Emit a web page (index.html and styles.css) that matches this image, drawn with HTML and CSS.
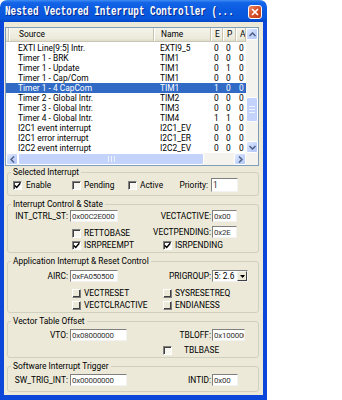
FILE: index.html
```html
<!DOCTYPE html>
<html>

<head>
    <meta charset="utf-8">
    <title>Nested Vectored Interrupt Controller</title>

    <link rel="stylesheet" href="styles.css">
</head>

<body>

    <div class="window">
        <div class="title_bar">
            <span class="title_text">Nested Vectored Interrupt Controller (...</span>
            <span class="close_btn">
                <svg width="8" height="8" viewBox="0 0 8 8"><path d="M1 1L7 7M7 1L1 7" stroke="#fff" stroke-width="1.7"/></svg>
            </span>
        </div>

        <div class="frame">
            <!-- список прерываний -->
            <div class="list_box">
                <div class="list_main">
                    <div class="list_row list_head">
                        <div class="c0"></div>
                        <div class="c_src">Source</div>
                        <div class="c_name">Name</div>
                        <div class="c_e">E</div>
                        <div class="c_p">P</div>
                        <div class="c_a">A</div>
                    </div>
                    <div class="list_row"><div class="c0"></div><div class="c_src">EXTI Line[9:5] Intr.</div><div class="c_name">EXTI9_5</div><div class="c_e">0</div><div class="c_p">0</div><div class="c_a">0</div></div>
                    <div class="list_row"><div class="c0"></div><div class="c_src">Timer 1 - BRK</div><div class="c_name">TIM1</div><div class="c_e">0</div><div class="c_p">0</div><div class="c_a">0</div></div>
                    <div class="list_row"><div class="c0"></div><div class="c_src">Timer 1 - Update</div><div class="c_name">TIM1</div><div class="c_e">0</div><div class="c_p">1</div><div class="c_a">0</div></div>
                    <div class="list_row"><div class="c0"></div><div class="c_src">Timer 1 - Cap/Com</div><div class="c_name">TIM1</div><div class="c_e">0</div><div class="c_p">0</div><div class="c_a">0</div></div>
                    <div class="list_row selected"><div class="c0"></div><div class="c_src">Timer 1 - 4 CapCom</div><div class="c_name">TIM1</div><div class="c_e">1</div><div class="c_p">0</div><div class="c_a">0</div></div>
                    <div class="list_row"><div class="c0"></div><div class="c_src">Timer 2 - Global Intr.</div><div class="c_name">TIM2</div><div class="c_e">0</div><div class="c_p">0</div><div class="c_a">0</div></div>
                    <div class="list_row"><div class="c0"></div><div class="c_src">Timer 3 - Global Intr.</div><div class="c_name">TIM3</div><div class="c_e">0</div><div class="c_p">0</div><div class="c_a">0</div></div>
                    <div class="list_row"><div class="c0"></div><div class="c_src">Timer 4 - Global Intr.</div><div class="c_name">TIM4</div><div class="c_e">1</div><div class="c_p">1</div><div class="c_a">0</div></div>
                    <div class="list_row"><div class="c0"></div><div class="c_src">I2C1 event interrupt</div><div class="c_name">I2C1_EV</div><div class="c_e">0</div><div class="c_p">0</div><div class="c_a">0</div></div>
                    <div class="list_row"><div class="c0"></div><div class="c_src">I2C1 error interrupt</div><div class="c_name">I2C1_ER</div><div class="c_e">0</div><div class="c_p">0</div><div class="c_a">0</div></div>
                    <div class="list_row"><div class="c0"></div><div class="c_src">I2C2 event interrupt</div><div class="c_name">I2C2_EV</div><div class="c_e">0</div><div class="c_p">0</div><div class="c_a">0</div></div>
                </div>

                <div class="vscroll">
                    <div class="sb_btn"><svg width="7" height="5" viewBox="0 0 7 5"><path d="M0.5 4L3.5 1L6.5 4" fill="none" stroke="#4d6185" stroke-width="1.5"/></svg></div>
                    <div class="sb_track v_top"></div>
                    <div class="sb_thumb v_thumb"><span class="grip_v"></span></div>
                    <div class="sb_track v_rest"></div>
                    <div class="sb_btn"><svg width="7" height="5" viewBox="0 0 7 5"><path d="M0.5 1L3.5 4L6.5 1" fill="none" stroke="#4d6185" stroke-width="1.5"/></svg></div>
                </div>

                <div class="hscroll">
                    <div class="sb_btn"><svg width="5" height="7" viewBox="0 0 5 7"><path d="M4 0.5L1 3.5L4 6.5" fill="none" stroke="#4d6185" stroke-width="1.5"/></svg></div>
                    <div class="sb_thumb h_thumb"><span class="grip_h"></span></div>
                    <div class="sb_track h_rest"></div>
                    <div class="sb_btn"><svg width="5" height="7" viewBox="0 0 5 7"><path d="M1 0.5L4 3.5L1 6.5" fill="none" stroke="#4d6185" stroke-width="1.5"/></svg></div>
                </div>
                <div class="corner"></div>
            </div>

            <fieldset class="group grp_sel">
                <legend>Selected Interrupt</legend>
                <div class="sel_row">
                    <label class="cb_item first"><span class="chk on"><svg width="7" height="7" viewBox="0 0 7 7"><path d="M0.8 3.4L2.7 5.4L6.3 1.2" fill="none" stroke="#000" stroke-width="1.5"/></svg></span>Enable</label>
                    <label class="cb_item"><span class="chk"></span>Pending</label>
                    <label class="cb_item"><span class="chk"></span>Active</label>
                    <div class="lbl">Priority:</div>
                    <div><input class="txt prio" type="text" value="1"></div>
                </div>
            </fieldset>

            <fieldset class="group grp_state">
                <legend>Interrupt Control &amp; State</legend>
                <div class="form_grid">
                    <div class="lbl">INT_CTRL_ST:</div>
                    <div><input class="txt w48" type="text" value="0x00C2E000"></div>
                    <div class="lbl">VECTACTIVE:</div>
                    <div><input class="txt w25" type="text" value="0x00"></div>

                    <div></div>
                    <label class="cb_item"><span class="chk"></span>RETTOBASE</label>
                    <div class="lbl">VECTPENDING:</div>
                    <div><input class="txt w25" type="text" value="0x2E"></div>

                    <div></div>
                    <label class="cb_item"><span class="chk on"><svg width="7" height="7" viewBox="0 0 7 7"><path d="M0.8 3.4L2.7 5.4L6.3 1.2" fill="none" stroke="#000" stroke-width="1.5"/></svg></span>ISRPREEMPT</label>
                    <label class="cb_item wide"><span class="chk on"><svg width="7" height="7" viewBox="0 0 7 7"><path d="M0.8 3.4L2.7 5.4L6.3 1.2" fill="none" stroke="#000" stroke-width="1.5"/></svg></span>ISRPENDING</label>
                </div>
            </fieldset>

            <fieldset class="group grp_app">
                <legend>Application Interrupt &amp; Reset Control</legend>
                <div class="form_grid">
                    <div class="lbl">AIRC:</div>
                    <div><input class="txt w48" type="text" value="0xFA050500"></div>
                    <div class="lbl">PRIGROUP:</div>
                    <div class="combo">
                        <span class="combo_val">5: 2.6</span>
                        <span class="combo_btn"><svg width="5" height="3" viewBox="0 0 5 3"><path d="M0 0H5L2.5 3Z" fill="#000"/></svg></span>
                    </div>

                    <div></div>
                    <label class="cb_item"><span class="chk flat"></span>VECTRESET</label>
                    <label class="cb_item wide"><span class="chk flat"></span>SYSRESETREQ</label>

                    <div></div>
                    <label class="cb_item"><span class="chk flat"></span>VECTCLRACTIVE</label>
                    <label class="cb_item wide"><span class="chk flat"></span>ENDIANESS</label>
                </div>
            </fieldset>

            <fieldset class="group grp_vto">
                <legend>Vector Table Offset</legend>
                <div class="form_grid">
                    <div class="lbl">VTO:</div>
                    <div><input class="txt w57" type="text" value="0x08000000"></div>
                    <div class="lbl">TBLOFF:</div>
                    <div><input class="txt w32" type="text" value="0x100000"></div>

                    <div></div>
                    <div></div>
                    <label class="cb_item wide"><span class="chk"></span><span class="tbl_text">TBLBASE</span></label>
                </div>
            </fieldset>

            <fieldset class="group grp_sw">
                <legend>Software Interrupt Trigger</legend>
                <div class="form_grid">
                    <div class="lbl">SW_TRIG_INT:</div>
                    <div><input class="txt w57" type="text" value="0x00000000"></div>
                    <div class="lbl">INTID:</div>
                    <div><input class="txt w26" type="text" value="0x00"></div>
                </div>
            </fieldset>
        </div>
    </div>

</body>

</html>
```

FILE: styles.css
```css
* {
    box-sizing: border-box;
}

body {
    margin: 0;
    background-color: #ffffff;
    font-family: Roboto, "Liberation Sans", Arial, sans-serif;
    font-size: 8.4px;
    color: #000000;
}

.window {
    width: 267px;
    height: 400px;
    display: flex;
    flex-direction: column;
}

/* заголовок окна */
.title_bar {
    height: 22px;
    flex: none;
    display: flex;
    align-items: center;
    padding: 1px 5px 0 5px;
    border-radius: 7px 7px 0 0;
    background: linear-gradient(to bottom, #3f8cf3 0%, #1464e8 12%, #0a5ae0 50%, #0655db 85%, #0546c6 100%);
}

.title_text {
    display: inline-block;
    font-family: "Liberation Mono", monospace;
    font-weight: bold;
    font-size: 9.3px;
    color: #ffffff;
    white-space: nowrap;
    transform: scaleY(1.3);
    text-shadow: 1px 1px 0 #0a2a8c;
}

.close_btn {
    margin-left: auto;
    width: 14px;
    height: 14px;
    border: 1px solid #ffffff;
    border-radius: 3px;
    background: linear-gradient(135deg, #ec8a66 0%, #d9542c 45%, #c23a13 100%);
    display: flex;
    align-items: center;
    justify-content: center;
}

.frame {
    flex: 1;
    background-color: #ece9d8;
    border-left: 4px solid #0b47d8;
    border-right: 4px solid #0b47d8;
    border-bottom: 5px solid #0b47d8;
    padding: 5px 0 3px 0;
}

/* список */
.list_box {
    margin: 0 4px 0 1px;
    width: 254px;
    height: 139px;
    border: 1px solid #7f9db9;
    background-color: #ffffff;
    display: grid;
    grid-template-columns: 240px 12px;
    grid-template-rows: 125px 12px;
}

.list_main {
    overflow: hidden;
}

.list_row {
    display: grid;
    grid-template-columns: 3px 145px 57px 12px 13px 10px;
    height: 10px;
    line-height: 10px;
    white-space: nowrap;
}

.list_row > div {
    overflow: hidden;
}

.list_row:nth-child(2) {
    margin-top: 1px;
}

.list_head {
    height: 14px;
    line-height: 13px;
    background: linear-gradient(to bottom, #f4f3ea 0%, #ebeadb 80%, #dedbc8 100%);
    border-bottom: 1px solid #cbc7b8;
}

.list_head > div {
    border-left: 1px solid #ffffff;
    border-right: 1px solid #c7c5b2;
}

.list_head .c0 {
    border-left: none;
}

.c_src {
    padding-left: 9px;
}

.c_name {
    padding-left: 6px;
}

.c_e,
.c_p,
.c_a {
    padding-left: 3px;
}

.selected {
    background-color: #316ac5;
    color: #ffffff;
}

/* полосы прокрутки */
.vscroll {
    display: flex;
    flex-direction: column;
    background-color: #f4f3ee;
}

.hscroll {
    display: flex;
    background-color: #f4f3ee;
}

.corner {
    background-color: #f4f3ee;
}

.sb_btn {
    width: 12px;
    height: 12px;
    flex: none;
    border: 1px solid #ffffff;
    border-radius: 2px;
    background: linear-gradient(135deg, #e3ebfd 0%, #c5d5fc 50%, #b4c8f6 100%);
    display: flex;
    align-items: center;
    justify-content: center;
}

.sb_thumb {
    flex: none;
    border: 1px solid #ffffff;
    border-radius: 2px;
    background-color: #c3d3fb;
    display: flex;
    align-items: center;
    justify-content: center;
}

.v_top {
    height: 57px;
}

.v_thumb {
    height: 25px;
}

.v_rest {
    flex: 1;
}

.h_thumb {
    width: 186px;
}

.h_rest {
    flex: 1;
}

.grip_v {
    width: 6px;
    height: 7px;
    border-top: 1px solid #eef3fe;
    border-bottom: 1px solid #eef3fe;
    background: linear-gradient(to bottom, transparent 2px, #eef3fe 2px, #eef3fe 3px, transparent 3px);
}

.grip_h {
    width: 7px;
    height: 6px;
    border-left: 1px solid #eef3fe;
    border-right: 1px solid #eef3fe;
    background: linear-gradient(to right, transparent 2px, #eef3fe 2px, #eef3fe 3px, transparent 3px);
}

/* группы */
.group {
    margin: 0 4px 0 3px;
    width: 252px;
    min-width: 0;
    padding: 0;
    border: 1px solid #d0d0bf;
    border-radius: 3px;
}

.group legend {
    margin-left: 3px;
    padding: 0 2px;
    line-height: 10px;
    height: 10px;
}

.grp_sel {
    margin-top: 1px;
    padding: 1px 0 3px 0;
}

.grp_state {
    margin-top: 3px;
    padding: 1px 0 2px 0;
}

.grp_app {
    margin-top: 3px;
    padding: 4px 0 2px 0;
}

.grp_vto {
    margin-top: 3px;
    padding: 3px 0 2px 0;
}

.grp_sw {
    margin-top: 3px;
    padding: 3px 0 5px 0;
}

.sel_row {
    display: grid;
    grid-template-columns: 62px 56px 52px 33px 1fr;
    height: 14px;
    align-items: center;
}

.form_grid {
    display: grid;
    grid-template-columns: 62px 91px 51px 1fr;
    align-items: end;
}

.grp_state .form_grid {
    grid-template-rows: 12px 16px 12px;
}

.grp_app .form_grid {
    grid-template-rows: 12px 16px 12px;
}

.grp_vto .form_grid {
    grid-template-rows: 12px 14px;
}

.grp_sw .form_grid {
    grid-template-rows: 12px;
}

.lbl {
    display: flex;
    justify-content: flex-end;
    white-space: nowrap;
    padding-right: 2px;
    line-height: 12px;
}

.form_grid .lbl:nth-child(4n+3) {
    padding-right: 1px;
}

.sel_row .lbl {
    padding-right: 3px;
}

.cb_item {
    display: flex;
    align-items: center;
    gap: 3px;
    height: 10px;
    margin-left: 2px;
    white-space: nowrap;
}

.cb_item.first {
    margin-left: 5px;
    gap: 4px;
}

.cb_item.wide {
    grid-column: 3 / 5;
}

.tbl_text {
    margin-left: 9px;
}

.chk {
    width: 9px;
    height: 9px;
    flex: none;
    border: 1px solid;
    border-color: #808080 #ffffff #ffffff #808080;
    box-shadow: inset 1px 1px 0 #404040;
    background-color: #f7f6f0;
    display: flex;
    align-items: center;
    justify-content: center;
}

.chk.on {
    background-color: #ffffff;
}

.chk.flat {
    border-color: #ffffff #808080 #808080 #ffffff;
    box-shadow: inset -1px -1px 0 #404040;
    background-color: #ece9d8;
}

.txt {
    display: block;
    height: 12px;
    margin: 0;
    padding: 0 0 0 1px;
    border: 1px solid;
    border-color: #7f7f7f #f2f2f2 #f2f2f2 #7f7f7f;
    background-color: #ffffff;
    font-family: inherit;
    font-size: 7.9px;
    letter-spacing: -0.2px;
    color: #333333;
    outline: none;
}

.w48 {
    width: 48px;
}

.w57 {
    width: 57px;
}

.w25 {
    width: 25px;
}

.w26 {
    width: 26px;
}

.w32 {
    width: 33px;
}

.prio {
    width: 27px;
    height: 14px;
    font-size: 8.4px;
}

.combo {
    width: 36px;
    height: 12px;
    border: 1px solid;
    border-color: #7f7f7f #f2f2f2 #f2f2f2 #7f7f7f;
    background-color: #ffffff;
    display: flex;
    align-items: center;
    line-height: 10px;
}

.combo_val {
    flex: 1;
    padding-left: 1px;
    white-space: nowrap;
}

.combo_btn {
    width: 10px;
    height: 10px;
    border: 1px solid;
    border-color: #f4f3ee #404040 #404040 #f4f3ee;
    background-color: #ece9d8;
    display: flex;
    align-items: center;
    justify-content: center;
}
```
